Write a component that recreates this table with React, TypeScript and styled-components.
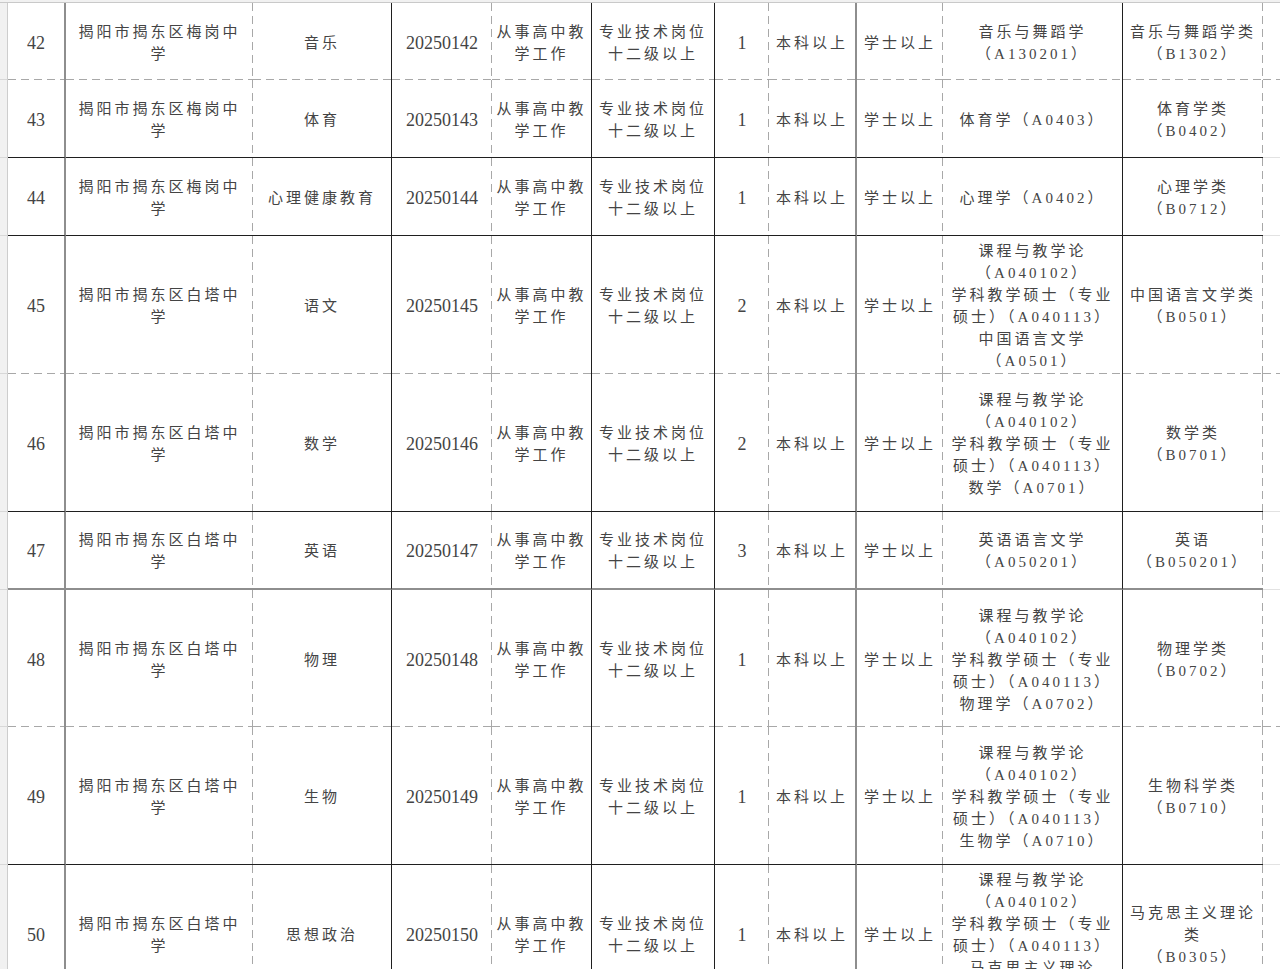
import React from "react";
import styled, { createGlobalStyle } from "styled-components";

type Edge = "solid" | "gray" | "dash" | "faint" | "none";

interface PostRow {
  no: string;
  school: string[];
  subject: string;
  code: string;
  count: string;
  majorA: string[];
  majorB: string[];
}

const MEIGANG = ["揭阳市揭东区梅岗中", "学"];
const BAITA = ["揭阳市揭东区白塔中", "学"];
const JOB = ["从事高中教", "学工作"];
const LEVEL = ["专业技术岗位", "十二级以上"];
const PEDAGOGY = ["课程与教学论", "（A040102）", "学科教学硕士（专业", "硕士）（A040113）"];

const rows: PostRow[] = [
  { no: "42", school: MEIGANG, subject: "音乐", code: "20250142", count: "1", majorA: ["音乐与舞蹈学", "（A130201）"], majorB: ["音乐与舞蹈学类", "（B1302）"] },
  { no: "43", school: MEIGANG, subject: "体育", code: "20250143", count: "1", majorA: ["体育学（A0403）"], majorB: ["体育学类", "（B0402）"] },
  { no: "44", school: MEIGANG, subject: "心理健康教育", code: "20250144", count: "1", majorA: ["心理学（A0402）"], majorB: ["心理学类", "（B0712）"] },
  { no: "45", school: BAITA, subject: "语文", code: "20250145", count: "2", majorA: [...PEDAGOGY, "中国语言文学", "（A0501）"], majorB: ["中国语言文学类", "（B0501）"] },
  { no: "46", school: BAITA, subject: "数学", code: "20250146", count: "2", majorA: [...PEDAGOGY, "数学（A0701）"], majorB: ["数学类", "（B0701）"] },
  { no: "47", school: BAITA, subject: "英语", code: "20250147", count: "3", majorA: ["英语语言文学", "（A050201）"], majorB: ["英语", "（B050201）"] },
  { no: "48", school: BAITA, subject: "物理", code: "20250148", count: "1", majorA: [...PEDAGOGY, "物理学（A0702）"], majorB: ["物理学类", "（B0702）"] },
  { no: "49", school: BAITA, subject: "生物", code: "20250149", count: "1", majorA: [...PEDAGOGY, "生物学（A0710）"], majorB: ["生物科学类", "（B0710）"] },
  { no: "50", school: BAITA, subject: "思想政治", code: "20250150", count: "1", majorA: [...PEDAGOGY, "马克思主义理论", "（A0305）"], majorB: ["马克思主义理论", "类", "（B0305）"] },
];

// line under each row, and line right of each column (spreadsheet borders)
const rowBottoms: Edge[] = ["dash", "solid", "solid", "dash", "solid", "gray", "dash", "solid", "none"];
const colRights: Edge[] = ["gray", "dash", "solid", "dash", "solid", "solid", "dash", "gray", "dash", "solid", "dash", "none"];

const LINE: Record<string, string> = {
  solid: "1px solid #1f1f1f",
  gray: "2px solid #8e8e8e",
  faint: "1px solid #e2e2e2",
};

const edgeCss = (right: Edge, bottom: Edge) => {
  const layers: string[] = [];
  const sizes: string[] = [];
  const spots: string[] = [];
  const repeats: string[] = [];
  let out = "";
  if (right === "dash") {
    layers.push("linear-gradient(to bottom, #a8a8a8 0 8px, transparent 8px 13px)");
    sizes.push("1px 13px");
    spots.push("right top");
    repeats.push("repeat-y");
  } else if (right !== "none") {
    out += `border-right: ${LINE[right]};`;
  }
  if (bottom === "dash") {
    layers.push("linear-gradient(to right, #a8a8a8 0 8px, transparent 8px 13px)");
    sizes.push("13px 1px");
    spots.push("left bottom");
    repeats.push("repeat-x");
  } else if (bottom !== "none") {
    out += `border-bottom: ${LINE[bottom]};`;
  }
  if (layers.length) {
    out += `background-image: ${layers.join(", ")};
      background-size: ${sizes.join(", ")};
      background-position: ${spots.join(", ")};
      background-repeat: ${repeats.join(", ")};`;
  }
  return out;
};

const GlobalStyle = createGlobalStyle`
  html, body {
    margin: 0;
    padding: 0;
    background: #f1f1f1;
  }
  #root {
    width: 1280px;
    height: 969px;
    overflow: hidden;
  }
`;

const Sheet = styled.div`
  display: grid;
  grid-template-columns: 8px 58px 187px 139px 100px 100px 123px 54px 88px 86px 180px 140px 1fr;
  grid-template-rows: 77px 78px 78px 138px 138px 78px 137px 138px 138px;
  margin-top: 2px;
  border-top: 1px solid #c9c9c9;
  font-family: "Liberation Serif", "Noto Sans CJK SC", serif;
  color: #444;
`;

const Gutter = styled.div`
  box-sizing: border-box;
  background: #f1f1f1;
  border-right: 1px solid #cdcdcd;
  border-bottom: 1px solid #d8d8d8;
`;

const Cell = styled.div<{ $right: Edge; $bottom: Edge; $numeric?: boolean; $pad?: number }>`
  box-sizing: border-box;
  display: flex;
  flex-direction: column;
  align-items: center;
  justify-content: center;
  text-align: center;
  padding: 2px ${({ $pad }) => $pad ?? 4}px 0;
  background-color: #fff;
  font-size: ${({ $numeric }) => ($numeric ? "18px" : "15px")};
  letter-spacing: ${({ $numeric }) => ($numeric ? "0" : "3px")};
  line-height: 22px;
  ${({ $right, $bottom }) => edgeCss($right, $bottom)}
`;

const Line = styled.span`
  display: block;
  white-space: nowrap;
`;

const Lines = ({ items }: { items: string[] }) => (
  <>
    {items.map((t, i) => (
      <Line key={i}>{t}</Line>
    ))}
  </>
);

export default function App() {
  return (
    <>
      <GlobalStyle />
      <Sheet>
        {rows.map((r, ri) => {
          const b = rowBottoms[ri];
          const extraBottom: Edge = b === "dash" ? "dash" : b === "none" ? "none" : "faint";
          return (
            <React.Fragment key={r.no}>
              <Gutter />
              <Cell $right={colRights[0]} $bottom={b} $numeric>{r.no}</Cell>
              <Cell $right={colRights[1]} $bottom={b} $pad={6}><Lines items={r.school} /></Cell>
              <Cell $right={colRights[2]} $bottom={b}>{r.subject}</Cell>
              <Cell $right={colRights[3]} $bottom={b} $numeric>{r.code}</Cell>
              <Cell $right={colRights[4]} $bottom={b}><Lines items={JOB} /></Cell>
              <Cell $right={colRights[5]} $bottom={b}><Lines items={LEVEL} /></Cell>
              <Cell $right={colRights[6]} $bottom={b} $numeric>{r.count}</Cell>
              <Cell $right={colRights[7]} $bottom={b}>本科以上</Cell>
              <Cell $right={colRights[8]} $bottom={b}>学士以上</Cell>
              <Cell $right={colRights[9]} $bottom={b}><Lines items={r.majorA} /></Cell>
              <Cell $right={colRights[10]} $bottom={b}><Lines items={r.majorB} /></Cell>
              <Cell $right={colRights[11]} $bottom={extraBottom} />
            </React.Fragment>
          );
        })}
      </Sheet>
    </>
  );
}
